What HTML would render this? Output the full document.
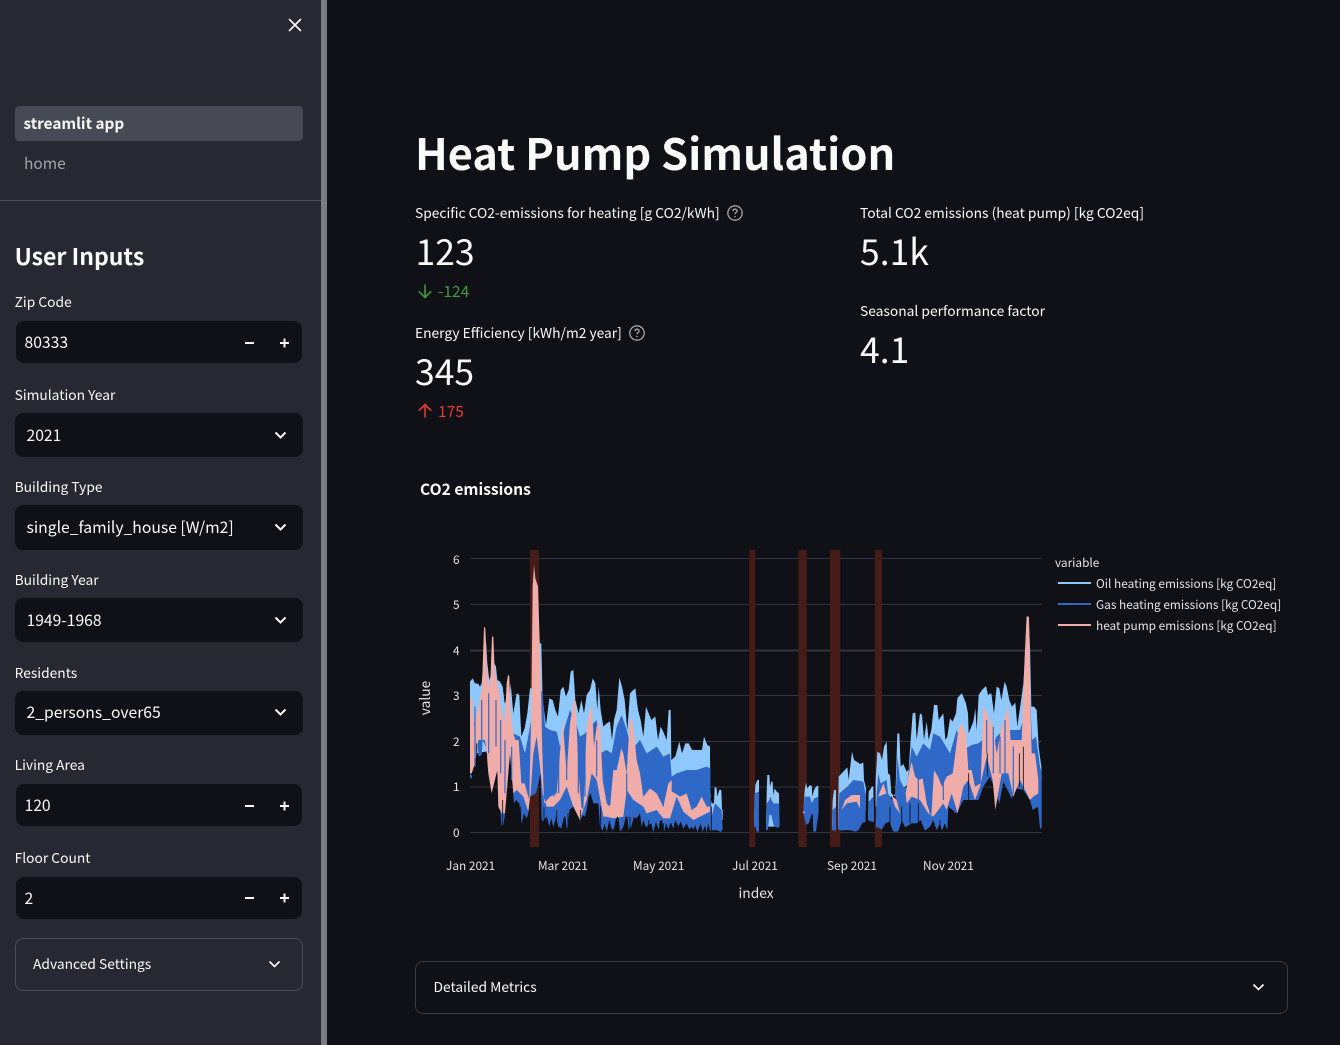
<!DOCTYPE html>
<html lang="en"><head><meta charset="utf-8"><title>Heat Pump Simulation</title>
<style>
html,body{margin:0;padding:0;width:1340px;height:1045px;overflow:hidden;background:#0f1117;color:#fafafa;font-family:"Noto Sans CJK JP","Liberation Sans",sans-serif}
.t{position:absolute;white-space:nowrap;line-height:20px;height:20px}
.l{font-size:13.8px;left:14.600px;margin-top:-1px}
.v{font-size:15.700px}
.box{position:absolute;background:#0f1117;border-radius:8px}
svg{position:absolute;overflow:visible}
#side{position:absolute;left:0;top:0;width:321px;height:1045px;background:#282832}
#bar{position:absolute;left:321px;top:0;width:6px;height:1045px;background:#7b7b82}
.exp{position:absolute;border:1px solid #4b4c56;border-radius:8px;box-sizing:border-box}
.m{font-size:13.800px;margin-top:-1px}
.big{font-size:35.500px;line-height:40px;height:40px;margin-top:1px}
.tick{font-size:11.850px;color:#e4e4e6}
</style></head><body>
<div id="side"></div><div id="bar"></div>

<svg style="left:288px;top:18px" width="14" height="14" viewBox="0 0 14 14"><path d="M1 1L13 13M13 1L1 13" stroke="#fafafa" stroke-width="1.7" fill="none"/></svg>
<div style="position:absolute;left:15px;top:106px;width:288px;height:35px;background:#474954;border-radius:4px"></div>
<div class="t" style="left:23.500px;top:113px;font-size:15.300px;font-weight:700">streamlit app</div>
<div class="t" style="left:24px;top:153px;font-size:15.500px;color:#a3a4a9">home</div>
<div style="position:absolute;left:0;top:200px;width:321px;height:1px;background:#4c4d57"></div>
<div class="t" style="left:14.600px;top:244px;font-size:23px;font-weight:700;line-height:22px">User Inputs</div>

<div class="t l" style="top:292px">Zip Code</div>
<div class="box" style="left:16px;top:321px;width:286px;height:42px"></div>
<div class="t v" style="left:24.500px;top:332px">80333</div>
<svg style="left:245px;top:338px" width="44" height="10"><path d="M0 5H9M35 5H44M39.5 .5V9.5" stroke="#fafafa" stroke-width="2" fill="none"/></svg>

<div class="t l" style="top:385px">Simulation Year</div>
<div class="box" style="left:15px;top:413px;width:288px;height:44px"></div>
<div class="t v" style="left:26.500px;top:425px">2021</div>
<svg style="left:274px;top:431px" width="13" height="9"><path d="M1.5 1.5L6.5 6.5L11.500 1.5" stroke="#fafafa" stroke-width="2" fill="none"/></svg>

<div class="t l" style="top:477px">Building Type</div>
<div class="box" style="left:15px;top:505px;width:288px;height:45px"></div>
<div class="t v" style="left:26.500px;top:517px">single_family_house [W/m2]</div>
<svg style="left:274px;top:523px" width="13" height="9"><path d="M1.5 1.5L6.5 6.5L11.500 1.5" stroke="#fafafa" stroke-width="2" fill="none"/></svg>

<div class="t l" style="top:570px">Building Year</div>
<div class="box" style="left:15px;top:598px;width:288px;height:44px"></div>
<div class="t v" style="left:26.500px;top:610px">1949-1968</div>
<svg style="left:274px;top:616px" width="13" height="9"><path d="M1.5 1.5L6.5 6.5L11.500 1.5" stroke="#fafafa" stroke-width="2" fill="none"/></svg>

<div class="t l" style="top:663px">Residents</div>
<div class="box" style="left:15px;top:691px;width:288px;height:44px"></div>
<div class="t v" style="left:26.500px;top:702px">2_persons_over65</div>
<svg style="left:274px;top:708px" width="13" height="9"><path d="M1.5 1.5L6.5 6.5L11.500 1.5" stroke="#fafafa" stroke-width="2" fill="none"/></svg>

<div class="t l" style="top:755px">Living Area</div>
<div class="box" style="left:16px;top:784px;width:286px;height:42px"></div>
<div class="t v" style="left:24.500px;top:795px">120</div>
<svg style="left:245px;top:801px" width="44" height="10"><path d="M0 5H9M35 5H44M39.5 .5V9.5" stroke="#fafafa" stroke-width="2" fill="none"/></svg>

<div class="t l" style="top:848px">Floor Count</div>
<div class="box" style="left:16px;top:877px;width:286px;height:42px"></div>
<div class="t v" style="left:24.500px;top:888px">2</div>
<svg style="left:245px;top:893px" width="44" height="10"><path d="M0 5H9M35 5H44M39.5 .5V9.5" stroke="#fafafa" stroke-width="2" fill="none"/></svg>

<div class="exp" style="left:15px;top:938px;width:288px;height:53px"></div>
<div class="t" style="left:33px;top:953px;font-size:13.800px">Advanced Settings</div>
<svg style="left:268px;top:960px" width="13" height="9"><path d="M1.5 1.500L6.500 6.500L11.500 1.500" stroke="#fafafa" stroke-width="1.6" fill="none"/></svg>

<div class="t" style="left:415px;top:128px;font-size:43.300px;font-weight:700;line-height:48px;height:48px">Heat Pump Simulation</div>

<div class="t m" style="left:415px;top:203px">Specific CO2-emissions for heating [g CO2/kWh]</div>
<svg style="left:727px;top:205px" width="16" height="16" viewBox="0 0 16 16"><circle cx="8" cy="8" r="7.2" stroke="#a6a7ab" stroke-width="1.300" fill="none"/><path d="M5.900 6.200C6 4.800 7 4.200 8 4.200C9.200 4.200 10.100 5 10.100 6C10.100 7.400 8 7.500 8 9.300" stroke="#a6a7ab" stroke-width="1.300" fill="none"/><circle cx="8" cy="11.500" r=".8" fill="#a6a7ab"/></svg>
<div class="t big" style="left:415.500px;top:230px">123</div>
<svg style="left:418px;top:284px" width="14" height="14" viewBox="0 0 14 14"><path d="M7 .5V13.500M.8 7.300L7 13.500L13.200 7.300" stroke="#3d9a3d" stroke-width="1.600" fill="none"/></svg>
<div class="t" style="left:438px;top:281px;font-size:15.500px;color:#3d9a3d">-124</div>

<div class="t m" style="left:415px;top:323px">Energy Efficiency [kWh/m2 year]</div>
<svg style="left:629px;top:325px" width="16" height="16" viewBox="0 0 16 16"><circle cx="8" cy="8" r="7.2" stroke="#a6a7ab" stroke-width="1.300" fill="none"/><path d="M5.900 6.200C6 4.800 7 4.200 8 4.200C9.200 4.200 10.100 5 10.100 6C10.100 7.400 8 7.500 8 9.300" stroke="#a6a7ab" stroke-width="1.300" fill="none"/><circle cx="8" cy="11.500" r=".8" fill="#a6a7ab"/></svg>
<div class="t big" style="left:415px;top:350px">345</div>
<svg style="left:418px;top:404px" width="14" height="14" viewBox="0 0 14 14"><path d="M7 13.500V.5M.8 6.700L7 .5L13.200 6.700" stroke="#e8392f" stroke-width="1.600" fill="none"/></svg>
<div class="t" style="left:438px;top:401px;font-size:15.500px;color:#e8392f">175</div>

<div class="t m" style="left:860px;top:203px">Total CO2 emissions (heat pump) [kg CO2eq]</div>
<div class="t big" style="left:860px;top:230px">5.1k</div>
<div class="t m" style="left:860px;top:301px">Seasonal performance factor</div>
<div class="t big" style="left:860px;top:328px">4.1</div>

<div class="t" style="left:420px;top:479px;font-size:15.600px;font-weight:700">CO2 emissions</div>

<svg style="left:0;top:0" width="1340" height="1045" viewBox="0 0 1340 1045">
<g fill="#33353e">
<rect x="470" y="558" width="572" height="1"/><rect x="470" y="604" width="572" height="1"/><rect x="470" y="649.500" width="572" height="2"/><rect x="470" y="695" width="572" height="1"/><rect x="470" y="741" width="572" height="1"/><rect x="470" y="786.500" width="572" height="1"/><rect x="470" y="832" width="572" height="1"/>
</g>
<g fill="#451c18">
<rect x="530" y="550" width="9" height="297"/><rect x="749.300" y="550" width="6" height="297"/><rect x="798.300" y="550" width="8.400" height="297"/><rect x="830" y="550" width="10.300" height="297"/><rect x="875" y="550" width="7" height="297"/>
</g>
<g transform="translate(410 540) scale(.33333)">
<polygon fill="#8fc8ff" points="180,425 188,415 195,430 200,430 205,432 210,440 215,430 222,350 228,305 232,370 238,420 245,400 252,368 258,380 262,420 270,425 278,440 284,490 290,480 296,500 302,430 310,520 320,460 328,465 334,590 344,565 352,520 360,445 368,445 374,300 386,310 394,310 398,480 408,555 418,475 428,480 436,510 444,530 452,450 460,440 468,470 476,450 482,395 490,390 496,480 506,520 514,480 522,520 530,465 540,450 548,415 556,430 562,510 566,440 572,510 580,560 590,550 600,545 606,600 612,540 620,510 628,412 636,440 644,480 652,570 660,460 670,450 676,445 684,510 692,540 700,590 708,500 716,520 724,540 736,530 744,600 752,560 762,580 770,600 776,510 782,510 784,660 796,650 808,605 816,640 826,610 836,610 846,630 856,630 866,630 876,630 882,590 892,615 900,620 901,770 905,790 912,790 914,740 920,745 922,770 928,750 934,750 936,810 938,810 938,840 905,830 900,720 784,720 700,680 640,680 560,650 400,620 340,640 300,620 200,640 180,700"/>
<polygon fill="#2f68c6" points="180,700 186,706 186,714 180,714 180,600 195,540 210,560 225,540 240,510 252,515 262,530 275,540 285,570 300,560 310,580 330,590 345,640 360,560 372,500 385,450 398,455 405,560 420,570 440,575 450,620 465,560 480,510 495,540 510,590 525,580 540,560 560,540 570,640 590,630 605,640 620,560 635,525 650,570 665,630 690,600 710,640 740,620 760,650 780,640 785,710 800,700 830,690 860,690 890,680 901,685 901,770 905,830 915,790 935,810 938,868 932,876 925,872 916,870 912,870 905,872 900,872 895,850 890,876 885,856 878,876 872,850 862,876 856,855 850,868 844,860 838,868 830,850 820,866 812,845 805,860 796,840 790,866 784,850 780,850 776,868 768,850 762,876 756,840 750,840 746,870 738,845 730,876 724,850 715,855 708,862 700,840 695,862 690,820 680,835 672,830 664,860 656,868 652,830 648,830 640,860 630,875 625,830 620,825 612,865 606,870 598,840 590,875 584,850 578,872 570,860 565,790 550,790 542,760 536,770 530,810 525,830 518,825 510,850 505,800 500,790 490,800 478,810 474,860 470,865 466,830 462,830 454,865 445,860 438,830 430,862 424,835 418,860 410,830 405,835 400,845 395,840 392,700 378,760 360,770 355,820 350,835 342,820 335,850 328,790 318,780 312,790 300,640 288,690 284,830 280,855 274,855 270,780 262,700 248,630 232,630 218,600 215,645 206,650 200,600 195,640 188,560"/>
<polygon fill="#efaca8" points="180,480 186,470 192,560 200,520 208,490 216,440 222,260 226,265 232,400 240,450 246,290 250,290 254,390 262,430 270,470 276,520 284,550 290,430 294,403 298,410 302,520 310,580 316,600 326,600 334,730 344,730 352,760 358,780 364,500 368,140 372,75 376,115 384,140 388,270 392,380 396,600 402,790 420,770 440,760 458,540 470,700 480,550 494,465 500,560 506,700 514,800 520,810 530,560 540,510 546,500 552,620 560,560 570,545 578,720 590,790 600,800 610,690 620,690 634,625 640,640 650,700 660,530 670,560 680,660 690,700 700,770 720,745 740,760 760,800 775,730 785,720 785,755 796,760 810,770 830,760 845,810 860,800 875,770 890,800 900,800 900,815 880,825 850,840 820,815 800,770 780,835 760,835 740,810 710,820 700,800 670,780 650,750 640,830 610,835 590,830 580,830 560,720 545,700 530,780 510,840 490,800 470,740 450,780 430,800 410,800 398,760 390,680 380,590 370,640 362,760 355,815 340,770 320,750 310,760 300,640 285,820 275,820 265,800 262,690 245,760 235,700 230,640 225,600 205,600 195,670 185,700 180,700"/>
<path fill="none" stroke="#2f68c6" stroke-width="3.500" d="M195 500V680M215 480V600M236 460V640M258 480V620M272 540V700M285 600V760M305 620V720M420 600V760M432 620V770M446 650V760M470 600V720M505 600V760M525 640V770M560 600V710M590 660V780M600 650V790M650 700V760M700 640V760M720 680V740M740 660V750M760 690V800M800 720V760M830 700V750M860 700V790M880 700V765"/>
<path fill="none" stroke="#0f1117" stroke-width="2.500" d="M200 610V700M230 640V690M278 780V860M332 800V850M402 800V860M440 810V877M474 820V877M512 810V860M572 800V877M622 830V877M660 830V877M716 840V877M760 850V877M800 850V877M904 800V877"/>
</g>
<g transform="translate(730 540) scale(.33333)">
<g fill="#8fc8ff">
<polygon points="72,860 72,825 76,735 82,720 87,720 87,860"/>
<polygon points="108,860 110,760 112,705 118,705 120,740 124,725 128,725 130,765 134,745 140,755 147,760 148,860"/>
<polygon points="220,820 224,750 228,728 232,745 240,735 246,740 246,770 252,750 258,740 265,737 265,820 240,820"/>
<polygon points="306,860 308,780 312,750 318,750 318,860"/>
<polygon points="324,860 326,710 340,695 352,682 356,720 366,635 372,660 380,665 390,672 400,668 402,720 408,745 406,845 324,860"/>
<polygon points="414,840 416,755 426,740 430,740 432,845"/>
<polygon points="437,800 437,720 442,635 450,640 456,660 462,620 470,605 474,700 480,705 484,760 496,770 502,580 508,580 512,680 520,672 530,695 536,690 542,600 548,520 556,518 560,600 570,520 576,525 582,600 590,545 596,600 604,570 612,495 622,495 626,540 640,520 646,600 652,590 660,535 668,545 678,520 682,475 690,465 696,460 708,490 714,520 716,580 730,545 736,505 740,570 746,465 756,450 768,438 774,465 784,460 792,520 800,440 808,445 814,480 824,425 830,440 838,480 846,500 856,488 862,560 872,490 880,432 885,350 890,230 896,230 900,320 904,500 912,500 920,510 926,620 934,680 935,720 900,620 850,620 800,650 700,680 600,680 500,760"/>
</g>
<g fill="#2f68c6">
<polygon points="72,860 73,760 87,755 87,875 80,875 76,860"/>
<polygon points="108,870 110,790 118,780 122,770 130,790 147,790 148,862 140,862 132,860 124,825 118,825 114,870"/>
<polygon points="220,820 224,770 240,770 246,790 252,775 265,770 265,820 258,875 250,875 248,815 236,850 228,855 222,830"/>
<polygon points="306,870 308,810 318,800 318,872 312,872"/>
<polygon points="324,865 328,760 352,740 370,720 400,725 408,770 406,845 396,850 386,870 376,875 366,872 350,870 335,872 326,870"/>
<polygon points="414,840 416,785 430,770 432,845 424,845"/>
<polygon points="437,860 440,760 445,700 452,730 470,720 474,760 484,775 496,790 502,650 510,720 520,740 530,745 545,620 560,650 580,610 600,630 610,580 630,590 660,640 680,570 700,630 725,615 745,610 770,590 790,610 800,590 820,570 850,570 870,570 890,510 900,460 906,600 918,590 930,680 935,700 935,865 930,865 924,800 908,810 900,780 880,750 860,745 845,775 820,725 808,790 795,750 780,710 760,740 745,780 720,780 716,780 700,780 680,820 655,800 652,870 644,850 636,872 630,850 620,870 610,840 600,860 585,872 572,840 560,850 545,850 525,862 516,840 504,875 490,875 478,845 466,850 455,868 437,860"/>
</g>
<g fill="#efaca8">
<polygon points="527,760 535,710 545,665 555,710 566,720 578,715 590,790 604,830 612,690 624,710 636,740 650,710 668,700 685,570 695,550 708,580 715,690 725,690 735,740 752,730 760,500 772,520 780,560 785,530 800,640 815,560 835,500 842,600 860,600 875,600 884,350 890,230 897,230 902,520 905,640 915,640 925,720 925,760 910,770 900,780 885,750 870,720 850,770 835,700 815,700 796,810 788,720 770,650 750,740 735,780 715,720 700,740 683,820 665,760 650,810 640,790 610,830 595,820 570,780 545,770 530,790"/>
<polygon points="335,810 345,780 365,765 390,765 390,805 380,785 350,790"/>
<polygon points="448,760 460,730 470,760 445,770"/>
<polygon points="484,765 500,780 510,820 495,800"/>
<rect x="218" y="815" width="8" height="3"/><rect x="124" y="777" width="7" height="4"/>
</g>
<path fill="none" stroke="#2f68c6" stroke-width="3.500" d="M565 700V780M600 720V820M640 720V780M770 540V640M790 560V700M810 590V700M825 540V700M850 620V760"/>
<path fill="none" stroke="#0f1117" stroke-width="2.500" d="M480 800V875M515 800V860M540 790V850M565 790V850M630 840V877M716 700V780M772 640V710M868 640V740M880 620V750"/>
</g>
<g stroke-width="2" fill="none">
<path d="M1058 583H1091" stroke="#8fc8ff"/><path d="M1058 604H1091" stroke="#2f68c6"/><path d="M1058 625H1091" stroke="#efaca8"/>
</g>
</svg>

<div class="t tick" style="left:453px;top:550px">6</div>
<div class="t tick" style="left:453px;top:595px">5</div>
<div class="t tick" style="left:453px;top:641px">4</div>
<div class="t tick" style="left:453px;top:686px">3</div>
<div class="t tick" style="left:453px;top:732px">2</div>
<div class="t tick" style="left:453px;top:777px">1</div>
<div class="t tick" style="left:453px;top:823px">0</div>
<div class="t tick" style="left:446px;top:856px">Jan 2021</div>
<div class="t tick" style="left:538px;top:856px">Mar 2021</div>
<div class="t tick" style="left:633px;top:856px">May 2021</div>
<div class="t tick" style="left:732px;top:856px">Jul 2021</div>
<div class="t tick" style="left:827px;top:856px">Sep 2021</div>
<div class="t tick" style="left:923px;top:856px">Nov 2021</div>
<div class="t" style="left:738.500px;top:882px;font-size:13.800px;color:#e4e4e6">index</div>
<div class="t" style="left:403.500px;top:688px;width:40px;text-align:center;font-size:13.800px;color:#e4e4e6;transform:rotate(-90deg)">value</div>
<div class="t" style="left:1055px;top:553px;font-size:11.850px;color:#e4e4e6">variable</div>
<div class="t" style="left:1096px;top:574px;font-size:11.850px;color:#e4e4e6">Oil heating emissions [kg CO2eq]</div>
<div class="t" style="left:1096px;top:595px;font-size:11.850px;color:#e4e4e6">Gas heating emissions [kg CO2eq]</div>
<div class="t" style="left:1096px;top:616px;font-size:11.850px;color:#e4e4e6">heat pump emissions [kg CO2eq]</div>

<div class="exp" style="left:415px;top:961px;width:873px;height:53px;border-color:#3a3b43"></div>
<div class="t" style="left:433.500px;top:976px;font-size:13.800px">Detailed Metrics</div>
<svg style="left:1252px;top:983px" width="13" height="9"><path d="M1.500 1.500L6.500 6.500L11.500 1.500" stroke="#fafafa" stroke-width="1.600" fill="none"/></svg>
</body></html>
